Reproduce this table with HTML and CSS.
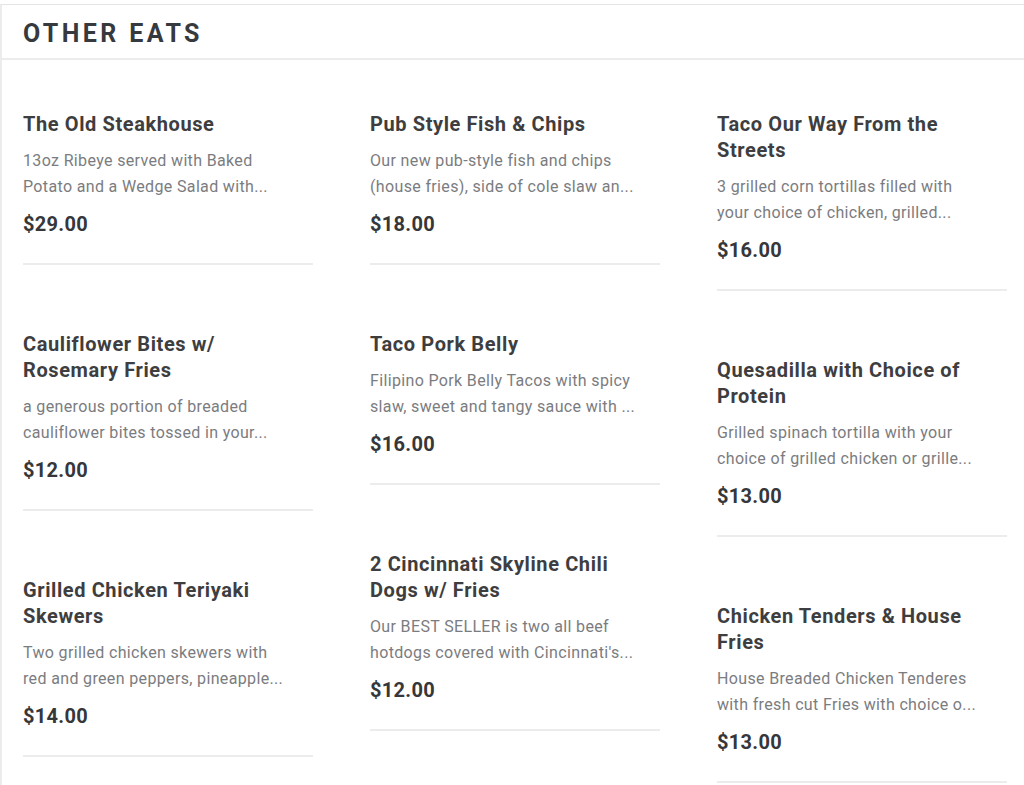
FILE: index.html
```html
<!DOCTYPE html>
<html lang="en">
<head>
<meta charset="utf-8">
<title>Other Eats</title>
<link rel="stylesheet" href="styles.css">
</head>
<body>
<section class="menu-section">
  <header class="section-header">
    <h2 class="section-title">OTHER EATS</h2>
  </header>
  <div class="menu-grid">
    <div class="menu-col">
      <div class="menu-item">
        <h3 class="item-name">The Old Steakhouse</h3>
        <p class="item-desc">13oz Ribeye served with Baked<br>Potato and a Wedge Salad with...</p>
        <div class="item-price">$29.00</div>
      </div>
      <div class="menu-item">
        <h3 class="item-name">Cauliflower Bites w/<br>Rosemary Fries</h3>
        <p class="item-desc">a generous portion of breaded<br>cauliflower bites tossed in your...</p>
        <div class="item-price">$12.00</div>
      </div>
      <div class="menu-item">
        <h3 class="item-name">Grilled Chicken Teriyaki<br>Skewers</h3>
        <p class="item-desc">Two grilled chicken skewers with<br>red and green peppers, pineapple...</p>
        <div class="item-price">$14.00</div>
      </div>
    </div>
    <div class="menu-col">
      <div class="menu-item">
        <h3 class="item-name">Pub Style Fish &amp; Chips</h3>
        <p class="item-desc">Our new pub-style fish and chips<br>(house fries), side of cole slaw an...</p>
        <div class="item-price">$18.00</div>
      </div>
      <div class="menu-item">
        <h3 class="item-name">Taco Pork Belly</h3>
        <p class="item-desc">Filipino Pork Belly Tacos with spicy<br>slaw, sweet and tangy sauce with ...</p>
        <div class="item-price">$16.00</div>
      </div>
      <div class="menu-item">
        <h3 class="item-name">2 Cincinnati Skyline Chili<br>Dogs w/ Fries</h3>
        <p class="item-desc">Our BEST SELLER is two all beef<br>hotdogs covered with Cincinnati's...</p>
        <div class="item-price">$12.00</div>
      </div>
    </div>
    <div class="menu-col menu-col-last">
      <div class="menu-item">
        <h3 class="item-name">Taco Our Way From the<br>Streets</h3>
        <p class="item-desc">3 grilled corn tortillas filled with<br>your choice of chicken, grilled...</p>
        <div class="item-price">$16.00</div>
      </div>
      <div class="menu-item">
        <h3 class="item-name">Quesadilla with Choice of<br>Protein</h3>
        <p class="item-desc">Grilled spinach tortilla with your<br>choice of grilled chicken or grille...</p>
        <div class="item-price">$13.00</div>
      </div>
      <div class="menu-item">
        <h3 class="item-name">Chicken Tenders &amp; House<br>Fries</h3>
        <p class="item-desc">House Breaded Chicken Tenderes<br>with fresh cut Fries with choice o...</p>
        <div class="item-price">$13.00</div>
      </div>
    </div>
  </div>
</section>
</body>
</html>
```

FILE: styles.css
```css
* { box-sizing: border-box; }

html, body {
  margin: 0;
  padding: 0;
  background: #ffffff;
}

body {
  font-family: Roboto, "Liberation Sans", Arial, sans-serif;
  color: #3b3c3f;
  overflow: hidden;
}

.menu-section {
  margin-top: 4px;
  border-top: 1px solid #e4e4e4;
  border-left: 2px solid #ececec;
}

.section-header {
  height: 55px;
  padding: 4px 0 0 21px;
  display: flex;
  align-items: center;
  border-bottom: 2px solid #ececec;
}

.section-title {
  margin: 0;
  font-size: 25px;
  font-weight: 700;
  letter-spacing: 3.4px;
  color: #36393e;
  line-height: 1;
}

.menu-grid {
  display: grid;
  grid-template-columns: 290px 290px 290px;
  column-gap: 57px;
  padding: 51px 0 0 21px;
}

.menu-col {
  display: flex;
  flex-direction: column;
}

.menu-item {
  padding-bottom: 26px;
  border-bottom: 2px solid #ececec;
  margin-bottom: 66px;
}

.item-name {
  margin: 0;
  font-size: 20px;
  font-weight: 700;
  line-height: 26px;
  letter-spacing: 0.6px;
  color: #3e3e40;
}

.item-desc {
  margin: 11px 0 0;
  font-size: 16px;
  line-height: 26px;
  letter-spacing: 0.35px;
  color: #7b7c80;
  white-space: nowrap;
}

.item-price {
  margin-top: 11px;
  font-size: 20px;
  font-weight: 700;
  line-height: 26px;
  letter-spacing: 0.3px;
  color: #36373a;
}
```
